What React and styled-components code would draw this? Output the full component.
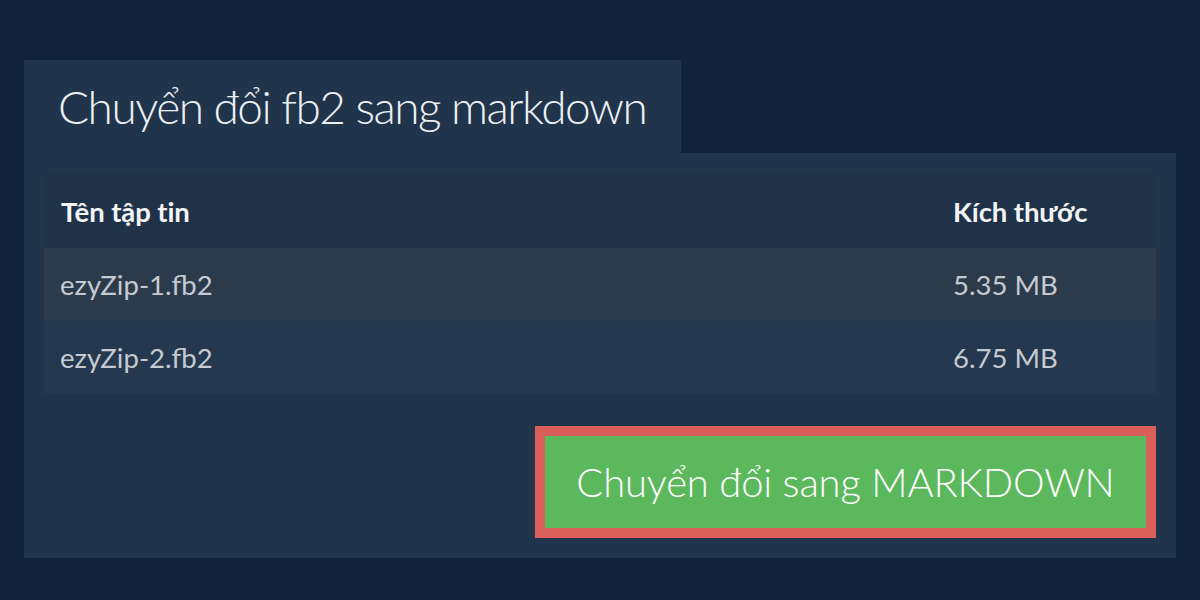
import React from 'react'
import styled, { createGlobalStyle } from 'styled-components'

const files = [
    { name: 'ezyZip-1.fb2', size: '5.35 MB' },
    { name: 'ezyZip-2.fb2', size: '6.75 MB' },
]

const App = () => {
    return (
        <>
            <Global />
            <Page>
                <Tab>
                    <Title>Chuyển đổi fb2 sang markdown</Title>
                </Tab>
                <Panel>
                    <Table>
                        <HeadRow>
                            <Cell>Tên tập tin</Cell>
                            <Cell>Kích thước</Cell>
                        </HeadRow>
                        {files.map((f, i) => (
                            <Row key={f.name} odd={i % 2 === 0}>
                                <Cell>{f.name}</Cell>
                                <Cell>{f.size}</Cell>
                            </Row>
                        ))}
                    </Table>
                    <Actions>
                        <ConvertButton>Chuyển đổi sang MARKDOWN</ConvertButton>
                    </Actions>
                </Panel>
            </Page>
        </>
    )
}

export default App

const Global = createGlobalStyle`
    body {
        margin: 0;
        background: #10233a;
        font-family: Lato, "Noto Sans", sans-serif;
    }
`

const Page = styled.div`
    padding: 60px 24px 42px;
    display: flex;
    flex-direction: column;
    align-items: flex-start;
`

const Tab = styled.div`
    background: #20344c;
    height: 93px;
    padding: 0 34px;
    width: 657px;
    box-sizing: border-box;
    display: flex;
    align-items: center;
`

const Title = styled.h1`
    margin: 0;
    font-weight: 300;
    font-size: 46px;
    letter-spacing: -1.5px;
    color: #ecf0f3;
    white-space: nowrap;
`

const Panel = styled.div`
    align-self: stretch;
    background: #20344c;
    padding: 21px 20px 20px;
    display: flex;
    flex-direction: column;
    gap: 32px;
`

const Table = styled.div`
    display: flex;
    flex-direction: column;
`

const HeadRow = styled.div`
    display: grid;
    grid-template-columns: 1fr 203px;
    height: 74px;
    align-items: center;
    background: #1f3248;
    color: #f2f4f6;
    font-weight: 700;
    font-size: 27.5px;
    letter-spacing: -0.1px;
    padding-left: 17px;
`

const Row = styled.div`
    display: grid;
    grid-template-columns: 1fr 203px;
    height: 73px;
    align-items: center;
    background: ${p => (p.odd ? '#2b3b4c' : '#24384f')};
    color: #c5cad1;
    font-size: 27.5px;
    letter-spacing: 0;
    padding-left: 16px;
`

const Cell = styled.div`
    white-space: nowrap;
`

const Actions = styled.div`
    display: flex;
    justify-content: flex-end;
`

const ConvertButton = styled.button`
    height: 112px;
    width: 621px;
    box-sizing: border-box;
    border: 10px solid #da5f5b;
    background: #5cb85c;
    color: #fff;
    font-family: Lato, "Noto Sans", sans-serif;
    font-weight: 300;
    font-size: 40px;
    letter-spacing: -0.2px;
    padding: 0;
    cursor: pointer;
`
